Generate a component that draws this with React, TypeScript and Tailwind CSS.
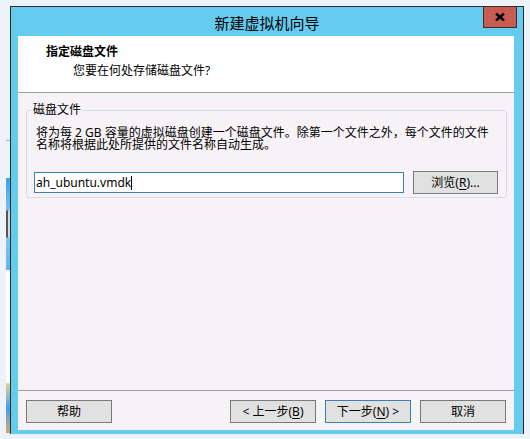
import type { ReactNode } from "react";

const font = "font-['Noto_Sans','Noto_Sans_CJK_SC',sans-serif]";

function WinButton({ children, primary = false }: { children: ReactNode; primary?: boolean }) {
  return (
    <button
      className={
        "w-[86px] h-[23px] flex items-center justify-center bg-[#e1e1e1] text-[12px] leading-[12px] text-black border " +
        (primary ? "border-[#3c7fb1]" : "border-[#7a7a7a]")
      }
    >
      {children}
    </button>
  );
}

function Key({ children }: { children: ReactNode }) {
  return <span className="underline underline-offset-[2px]">{children}</span>;
}

// slice of desktop wallpaper peeking out on the left
function DesktopStrip() {
  return (
    <div className="w-[10px] h-full flex flex-col pl-[6px]">
      <div className="h-[140px]" />
      <div className="h-px bg-[#7fb6dc]" />
      <div className="h-[37px]" />
      <div className="h-[92px] bg-gradient-to-b from-[#3aa3e4] via-[#8fcdf0] to-[#5fb5e6] flex items-center">
        <div className="w-[8px] h-[28px] rounded-full bg-[#d8d8d8] border-l-2 border-[#555]" />
      </div>
      <div className="h-[113px] bg-white" />
      <div className="h-[50px] bg-gradient-to-b from-[#e8d28a] via-[#3d9de0] to-[#c8a86a]" />
    </div>
  );
}

export default function App() {
  return (
    <div className={`w-[530px] h-[439px] bg-[#eef2f9] flex overflow-hidden ${font}`}>
      <DesktopStrip />

      <div className="mt-[6px] w-[514px] h-[428px] flex flex-col bg-[#65cbef] border-x border-t border-[#2d2d2d] relative">
        {/* title bar */}
        <div className="h-[29px] flex items-center justify-center pt-[3px] text-[15px] text-black">
          新建虚拟机向导
        </div>
        <button className="absolute -top-px right-[6px] w-[34px] h-[22px] bg-[#c75c53] border border-[#3b2d2d] flex items-center justify-center">
          <svg width="10" height="8" viewBox="0 0 10 8">
            <path d="M1 0.5 L9 7.5 M9 0.5 L1 7.5" stroke="#000" strokeWidth="2.4" />
          </svg>
        </button>

        {/* client area */}
        <div className="ml-[7px] mr-[9px] h-[394px] flex flex-col bg-[#f6f2f6] text-[12px] leading-[12px] text-black">
          <div className="h-[57px] bg-white border-b border-[#a0a0a0] pt-[10px] pl-[28px]">
            <div className="font-bold">指定磁盘文件</div>
            <div className="mt-[7px] ml-[27px]">您要在何处存储磁盘文件?</div>
          </div>

          <div className="flex-1 px-[8px] pt-[11px]">
            <fieldset className="border border-[#d5dde6] rounded-[3px] pl-[7px] pr-[8px] pb-[3px]">
              <legend className="-ml-[2px] px-px leading-[12px]">磁盘文件</legend>
              <div className="mt-[11px] pl-[2px] leading-[12px] whitespace-nowrap">
                <div>将为每 2 GB 容量的虚拟磁盘创建一个磁盘文件。除第一个文件之外，每个文件的文件</div>
                <div>名称将根据此处所提供的文件名称自动生成。</div>
              </div>
              <div className="mt-[20px] flex items-center gap-[9px]">
                <div className="w-[370px] h-[21px] bg-white border border-[#3c7fb1] flex items-center pl-[1px]">
                  <span>ah_ubuntu.vmdk</span>
                  <span className="w-px h-[14px] bg-black" />
                </div>
                <button className="w-[85px] h-[23px] bg-[#e1e1e1] border border-[#7a7a7a] flex items-center justify-center">
                  浏览(<Key>R</Key>)...
                </button>
              </div>
            </fieldset>
          </div>

          <div className="border-t border-[#a0a0a0] pt-[9px] pb-[7px] px-[8px] flex items-center">
            <WinButton>帮助</WinButton>
            <div className="ml-auto flex gap-[9px]">
              <WinButton>
                &lt; 上一步(<Key>B</Key>)
              </WinButton>
              <WinButton primary>
                下一步(<Key>N</Key>) &gt;
              </WinButton>
              <WinButton>取消</WinButton>
            </div>
          </div>
        </div>
      </div>
    </div>
  );
}
